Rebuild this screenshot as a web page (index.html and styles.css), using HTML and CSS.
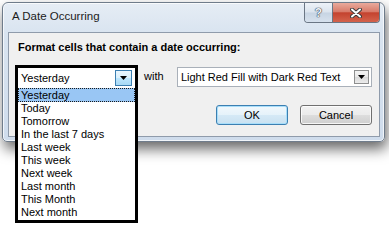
FILE: index.html
```html
<!DOCTYPE html>
<html lang="en">
<head>
    <meta charset="UTF-8">
    <title>A Date Occurring</title>
    <link rel="stylesheet" href="styles.css">
</head>
<body>

    <div class="window">
        <div class="titlebar">
            <span class="title">A Date Occurring</span>
            <div class="caption-buttons">
                <span class="cap-btn help">?</span>
                <span class="cap-btn close">
                    <svg width="12" height="10" viewBox="0 0 12 10">
                        <path d="M2 1.5 L10 8.5 M10 1.5 L2 8.5" stroke="#3d3d3d" stroke-width="4" stroke-linecap="round"/>
                        <path d="M2 1.5 L10 8.5 M10 1.5 L2 8.5" stroke="#ffffff" stroke-width="2" stroke-linecap="round"/>
                    </svg>
                </span>
            </div>
        </div>

        <div class="client">
            <p class="prompt">Format cells that contain a date occurring:</p>

            <div class="row">
                <div class="focus-box">
                    <div class="combo open">
                        <span class="value">Yesterday</span>
                        <span class="arrow hot">
                            <svg width="7" height="4" viewBox="0 0 7 4"><polygon points="0,0 7,0 3.5,4" fill="#000"/></svg>
                        </span>
                    </div>
                    <ul class="dropdown">
                        <li class="selected">Yesterday</li>
                        <li>Today</li>
                        <li>Tomorrow</li>
                        <li>In the last 7 days</li>
                        <li>Last week</li>
                        <li>This week</li>
                        <li>Next week</li>
                        <li>Last month</li>
                        <li>This Month</li>
                        <li>Next month</li>
                    </ul>
                </div>
                <span class="with">with</span>
                <div class="combo format">
                    <span class="value">Light Red Fill with Dark Red Text</span>
                    <span class="arrow">
                        <svg width="7" height="4" viewBox="0 0 7 4"><polygon points="0,0 7,0 3.5,4" fill="#000"/></svg>
                    </span>
                </div>
            </div>

            <div class="buttons">
                <button class="btn default">OK</button>
                <button class="btn">Cancel</button>
            </div>
        </div>
    </div>

</body>
</html>
```

FILE: styles.css
```css
body {
    margin: 0;
    width: 389px;
    height: 228px;
    overflow: hidden;
    background-color: #fff;
    font-family: 'Liberation Sans', Arial, sans-serif;
    font-size: 11px;
    color: #000;
}

.window {
    box-sizing: border-box;
    width: 383px;
    height: 140px;
    margin: 2px 0 0 2px;
    padding: 0 4px 4px 5px;
    border: 1px solid #6f7c8b;
    border-radius: 6px 6px 5px 5px;
    background: linear-gradient(to bottom, #e6edf5 0, #d9e4f0 30px, #cfdcec 100%);
    box-shadow: inset 0 0 0 1px rgba(255, 255, 255, 0.7), 2px 7px 14px rgba(0, 0, 0, 0.6);
}

/* title bar */
.titlebar {
    display: flex;
    align-items: flex-start;
    height: 29px;
}

.title {
    margin: 6px 0 0 4px;
    font-size: 11.5px;
    line-height: 15px;
    color: #1b1b1b;
}

.caption-buttons {
    display: flex;
    margin-left: auto;
    border: 1px solid #6a7684;
    border-top: none;
    border-radius: 0 0 4px 4px;
    overflow: hidden;
}

.cap-btn {
    display: flex;
    align-items: center;
    justify-content: center;
    height: 19px;
}

.help {
    width: 27px;
    border-right: 1px solid #6a7684;
    background: linear-gradient(to bottom, #edf2f8 0, #dbe4ee 48%, #c7d4e3 52%, #d6e1ed 100%);
    font-weight: bold;
    font-size: 12px;
    color: #eef2f7;
    text-shadow: 0 0 1px #3d4654, 0 0 1px #3d4654, 0 0 1px #3d4654;
}

.close {
    width: 46px;
    background: linear-gradient(to bottom, #e9aa9c 0, #d87c6b 45%, #c4432f 52%, #d3634c 100%);
}

/* client area */
.client {
    box-sizing: border-box;
    height: 105px;
    padding: 7px 7px 0 9px;
    border: 1px solid #8f9bab;
    background-color: #f0f0f0;
}

.prompt {
    margin: 0;
    line-height: 15px;
    font-weight: bold;
}

.row {
    display: flex;
    align-items: center;
    margin-top: 10px;
}

.focus-box {
    position: relative;
    margin-left: -3px;
    border: 3px solid #000;
    border-bottom: none;
}

.combo {
    box-sizing: border-box;
    display: flex;
    align-items: center;
    height: 20px;
    background-color: #fff;
}

.combo .value {
    flex: 1;
    padding-left: 3px;
    line-height: 18px;
    white-space: nowrap;
}

.combo.open {
    width: 117px;
}

.combo.format {
    width: 196px;
    border: 1px solid #a9b0b9;
}

.arrow {
    box-sizing: border-box;
    display: flex;
    align-items: center;
    justify-content: center;
    width: 17px;
    height: 16px;
    margin-right: 3px;
    border: 1px solid #8e8f8f;
    background: linear-gradient(to bottom, #f3f3f3 0, #e9e9e9 50%, #d9d9d9 51%, #ececec 100%);
}

.combo.format .arrow {
    width: 15px;
    height: 14px;
    margin-right: 2px;
}

.arrow.hot {
    border-color: #3c7fb1;
    background: linear-gradient(to bottom, #eaf6fd 0, #d9f0fc 50%, #bee6fd 51%, #a7d9f5 100%);
}

.dropdown {
    position: absolute;
    top: 100%;
    left: -3px;
    box-sizing: border-box;
    width: 123px;
    margin: 0;
    padding: 0 0 1px;
    list-style: none;
    background-color: #fff;
    border: 3px solid #000;
    border-top: none;
}

.dropdown li {
    height: 13px;
    line-height: 13px;
    padding-left: 3px;
    white-space: nowrap;
}

.dropdown li:first-child {
    border-top: 1px solid #7f8a96;
}

.dropdown li.selected {
    box-sizing: border-box;
    height: 14px;
    padding-left: 2px;
    background-color: #99c6f4;
    border: 1px dotted #1a1a1a;
    line-height: 12px;
}

.with {
    width: 22px;
    margin: 0 11px 0 6px;
    line-height: 15px;
}

/* dialog buttons */
.buttons {
    display: flex;
    justify-content: flex-end;
    gap: 12px;
    margin-top: 17px;
}

.btn {
    box-sizing: border-box;
    width: 72px;
    height: 20px;
    padding: 0;
    font-family: inherit;
    font-size: 11px;
    line-height: 18px;
    color: #000;
    border: 1px solid #707070;
    border-radius: 3px;
    background: linear-gradient(to bottom, #f2f2f2 0, #ebebeb 50%, #dddddd 51%, #cfcfcf 100%);
    box-shadow: inset 0 0 0 1px rgba(255, 255, 255, 0.8);
}

.btn.default {
    border-color: #3c7fb1;
    background: linear-gradient(to bottom, #f1f8fc 0, #e5f2fa 50%, #d5e9f6 51%, #c9e1f1 100%);
    box-shadow: inset 0 0 0 1px #a8defa;
}
```
